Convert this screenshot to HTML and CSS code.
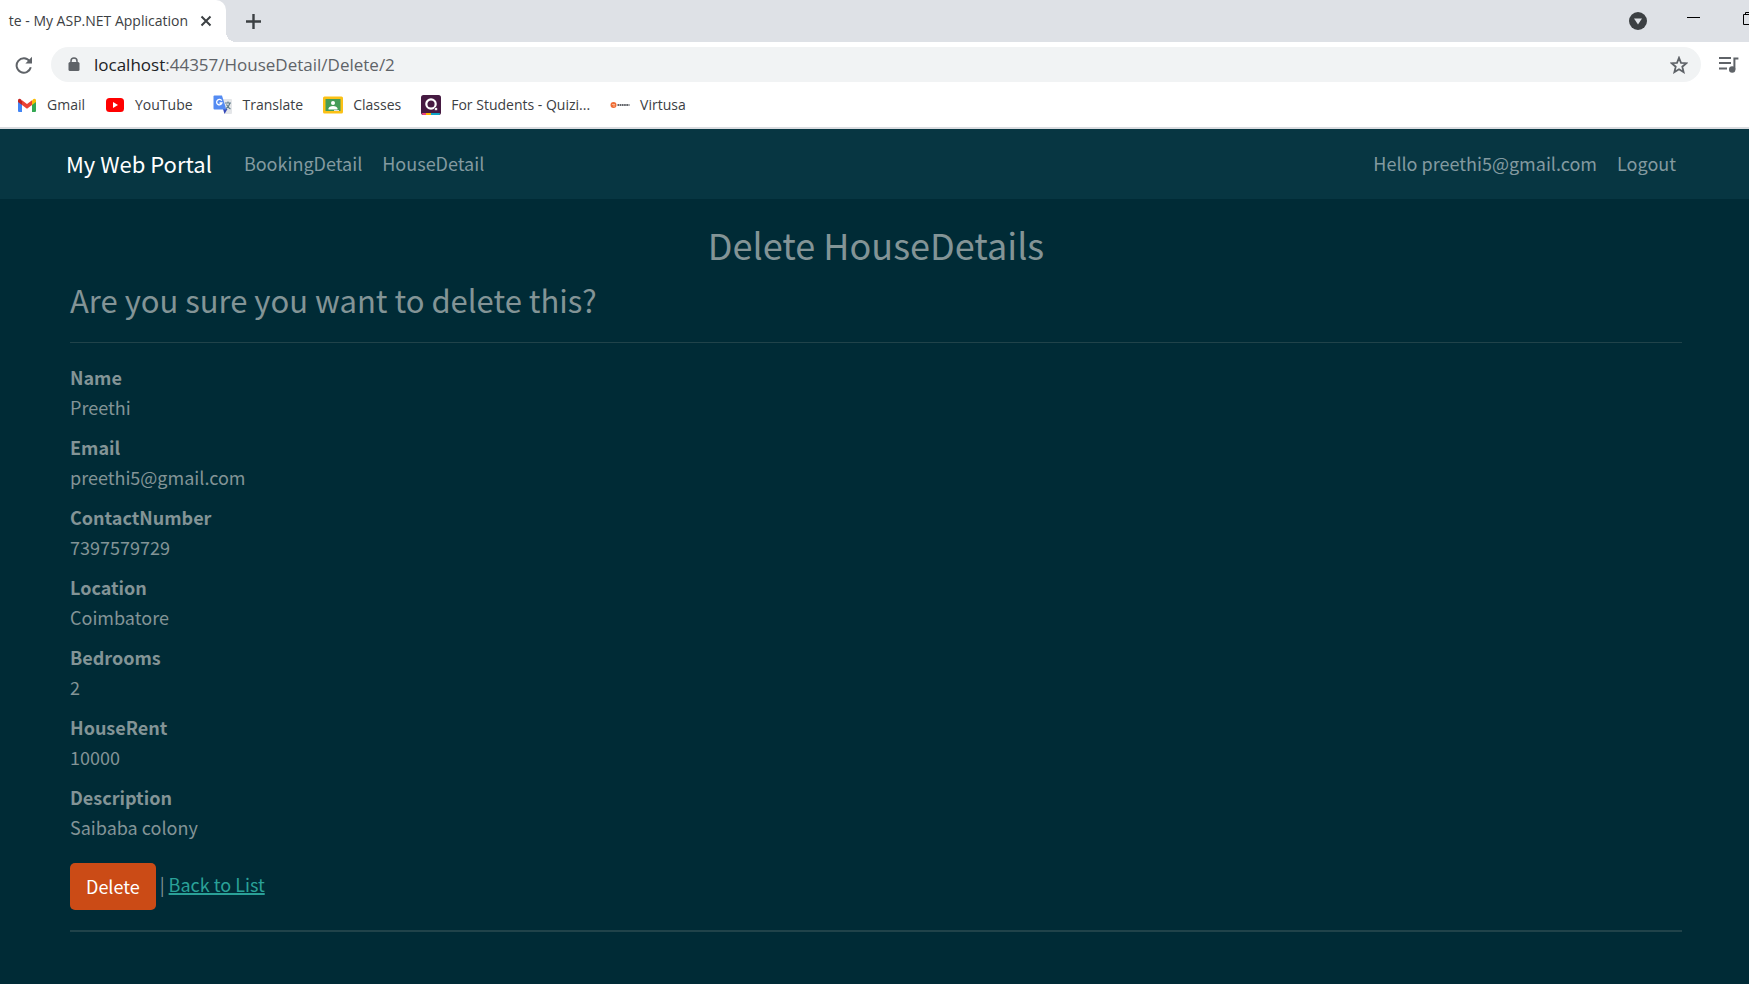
FILE: index.html
```html
<!DOCTYPE html>
<html lang="en">
<head>
<meta charset="utf-8">
<title>Delete - My ASP.NET Application</title>
<link rel="stylesheet" href="styles.css">
</head>
<body>
<header class="browser">
  <div class="tabstrip">
    <div class="tab">
      <span class="tab-title">te - My ASP.NET Application</span>
      <button class="icon-button" aria-label="Close tab"><svg width="12" height="12" viewBox="0 0 12 12" fill="none" stroke="#3c4043" stroke-width="2"><path d="M1.5 1.5l9 9M10.5 1.5l-9 9"/></svg></button>
    </div>
    <button class="icon-button new-tab" aria-label="New tab"><svg width="15" height="15" viewBox="0 0 15 15" fill="none" stroke="#3c4043" stroke-width="2.4"><path d="M7.5 0v15M0 7.500h15"/></svg></button>
    <div class="window-controls">
      <button class="icon-button" aria-label="Search tabs"><svg width="18" height="18" viewBox="0 0 18 18"><circle cx="9" cy="9" r="9" fill="#3c4043"/><path d="M5 6.5h8l-4 6z" fill="#dee1e6"/></svg></button>
      <button class="icon-button minimize" aria-label="Minimize"><svg width="13" height="1" viewBox="0 0 13 1"><path d="M0 0h13v1H0z"/></svg></button>
      <button class="icon-button restore" aria-label="Restore"><svg width="13" height="13" viewBox="0 0 13 13" fill="none" stroke="#000"><path d="M.5 2.5h10v10H.5zM2.5 2.5v-2h10v10h-2"/></svg></button>
    </div>
  </div>
  <div class="toolbar">
    <button class="icon-button reload" aria-label="Reload"><svg width="18" height="18" viewBox="0 0 18 18"><path d="M14.6 5.2A7.2 7.2 0 1 0 15.8 11.3" fill="none" stroke="#5f6368" stroke-width="2"/><path d="M17 .8v6.6h-6.6z" fill="#5f6368"/></svg></button>
    <div class="omnibox">
      <svg width="12" height="15" viewBox="0 0 12 15"><rect x="0.500" y="5" width="11" height="9" rx="1.500" fill="#5f6368"/><path d="M3 6V4a3 3 0 0 1 6 0V6" fill="none" stroke="#5f6368" stroke-width="1.500"/></svg>
      <span class="url"><span class="host">localhost</span>:44357/HouseDetail/Delete/2</span>
      <button class="icon-button" aria-label="Bookmark this page"><svg width="18" height="18" viewBox="0 0 18 18" fill="none" stroke="#5f6368" stroke-width="1.8"><path d="M9 1.800l2 5 5.500.4-4.200 3.500 1.300 5.400L9 13.200l-4.600 2.900 1.300-5.400-4.200-3.500 5.500-.4z"/></svg></button>
    </div>
    <button class="icon-button" aria-label="Media controls"><svg width="20" height="16" viewBox="0 0 20 16"><path d="M0 1h12M0 6h12M0 11.500h8" stroke="#5f6368" stroke-width="2"/><circle cx="13.200" cy="12.500" r="3.200" fill="#5f6368"/><path d="M15.400 12.500V1.500h4" fill="none" stroke="#5f6368" stroke-width="2"/></svg></button>
  </div>
  <nav class="bookmarks" aria-label="Bookmarks">
    <a href="#"><svg width="20" height="20" viewBox="0 0 20 20"><path d="M1 5v11q0 1 1 1h3V8z" fill="#4285f4"/><path d="M19 5v11q0 1-1 1h-3V8z" fill="#34a853"/><path d="M15 5.500l1.500-1.500Q19 3 19 5.500V7l-4 3z" fill="#fbbc04"/><path d="M5 5.500L3.500 4Q1 3 1 5.500V7l4 3z" fill="#c5221f"/><path d="M5 5.300L10 9l5-3.700V10l-5 3.700L5 10z" fill="#ea4335"/></svg><span>Gmail</span></a>
    <a href="#"><svg width="20" height="20" viewBox="0 0 20 20"><rect x="1" y="3" width="18" height="14" rx="3.500" fill="#f00"/><path d="M8 7v6l5-3z" fill="#fff"/></svg><span>YouTube</span></a>
    <a href="#"><svg width="20" height="20" viewBox="0 0 20 20"><path d="M8 4h10q1 0 1 1v13q0 1-1 1h-6z" fill="#e4e6e9"/><path d="M12 8h6M15 6.500V8M17 8q-1 4-4.500 6M13.500 9.500q1.500 3 4 4.500" fill="none" stroke="#607d8b" stroke-width="1.100"/><path d="M10 14h4.500l-3 5z" fill="#3548b8"/><path d="M1.500 .5H9l4.300 14H1.500q-1 0-1-1v-12q0-1 1-1z" fill="#548bf2"/><path d="M8.700 5.800A2.700 2.700 0 1 0 8.900 8H6.500" fill="none" stroke="#fff" stroke-width="1.300"/></svg><span>Translate</span></a>
    <a href="#"><svg width="20" height="20" viewBox="0 0 20 20"><rect y="1.500" width="20" height="17" rx="1.500" fill="#fbc116"/><rect x="2.500" y="4" width="15" height="12" fill="#459c58"/><circle cx="10" cy="8" r="2" fill="#fff"/><path d="M5.500 13.500Q6 11 10 11t4.500 2.500v1h-9z" fill="#fff"/><path d="M11 15h5v1h-5z" fill="#ddd"/></svg><span>Classes</span></a>
    <a href="#"><svg width="20" height="20" viewBox="0 0 20 20"><rect width="20" height="20" rx="2.500" fill="#461a42"/><path d="M1 18h4v2H2q-1 0-1-2z" fill="#ec407a"/><path d="M5 18h5v2H5z" fill="#ffb300"/><path d="M10 18h9q0 2-1 2h-8z" fill="#0ea5c6"/><circle cx="10" cy="9" r="4.700" fill="none" stroke="#fff" stroke-width="2.200"/><circle cx="15" cy="14" r="1.600" fill="#fff" stroke="#461a42" stroke-width=".6"/></svg><span>For Students - Quizi...</span></a>
    <a href="#"><svg width="20" height="20" viewBox="0 0 20 20"><circle cx="3.500" cy="10" r="3" fill="#ef6c35"/><path d="M2 9.500h3M3 11h2" stroke="#f8b590"/><path d="M7.500 10h12" stroke="#63666b" stroke-width="2.200" stroke-dasharray="1.700 .5"/></svg><span>Virtusa</span></a>
  </nav>
</header>
<nav class="navbar" aria-label="Main">
  <a class="brand" href="#">My Web Portal</a>
  <a class="nav-link" href="#">BookingDetail</a>
  <a class="nav-link" href="#">HouseDetail</a>
  <div class="account">
    <a class="nav-link" href="#">Hello preethi5@gmail.com</a>
    <a class="nav-link" href="#">Logout</a>
  </div>
</nav>
<main class="content">
  <h1>Delete HouseDetails</h1>
  <h2>Are you sure you want to delete this?</h2>
  <hr>
  <dl>
    <dt>Name</dt><dd>Preethi</dd>
    <dt>Email</dt><dd>preethi5@gmail.com</dd>
    <dt>ContactNumber</dt><dd>7397579729</dd>
    <dt>Location</dt><dd>Coimbatore</dd>
    <dt>Bedrooms</dt><dd>2</dd>
    <dt>HouseRent</dt><dd>10000</dd>
    <dt>Description</dt><dd>Saibaba colony</dd>
  </dl>
  <form class="actions">
    <button class="delete" type="button">Delete</button>
    <span class="after">|</span>
    <a class="after back" href="#">Back to List</a>
  </form>
  <hr class="footer-rule">
</main>
</body>
</html>
```

FILE: styles.css
```css
* { box-sizing: border-box; }

body {
  margin: 0;
  min-height: 100vh;
  overflow-x: hidden;
  background: #002b36;
  color: #839496;
  font: 18px/30px "Noto Sans CJK SC", sans-serif;
}

a { text-decoration: none; }
svg { display: block; flex: none; }

.browser {
  background: #fff;
  color: #3c4043;
  font: 14px/20px "Open Sans", sans-serif;
  border-bottom: 2px solid #dadce0;
  overflow: hidden;
}

.icon-button {
  display: block;
  flex: none;
  padding: 0;
  border: 0;
  background: none;
}

.tabstrip {
  display: flex;
  align-items: center;
  height: 42px;
  background: #dee1e6;
}

.tab {
  position: relative;
  display: flex;
  align-items: center;
  justify-content: flex-end;
  gap: 12px;
  width: 226px;
  height: 42px;
  padding-right: 14px;
  background: #fff;
  border-top-right-radius: 10px;
  white-space: nowrap;
}

.tab::after {
  content: "";
  position: absolute;
  left: 100%;
  bottom: 0;
  width: 10px;
  height: 10px;
  background: radial-gradient(circle at 100% 0, #dee1e6 10px, #fff 10px);
}

.new-tab { margin-left: 20px; }

.window-controls {
  display: flex;
  align-items: center;
  margin-left: auto;
  margin-right: -7px;
}
.minimize { margin: 0 43px 7px 40px; }
.restore { margin-bottom: 5px; }

.toolbar {
  display: flex;
  align-items: center;
  gap: 18px;
  padding: 5px 10px 0 15px;
}

.omnibox {
  display: flex;
  flex: 1;
  align-items: center;
  height: 35px;
  padding: 0 13px 0 17px;
  border-radius: 18px;
  background: #f1f3f4;
  font-size: 17px;
}
.url { flex: 1; margin-left: 14px; color: #5f6368; }
.host { color: #202124; }

.bookmarks {
  display: flex;
  gap: 20px;
  padding: 13px 17px 12px;
}
.bookmarks a {
  display: flex;
  align-items: center;
  gap: 10px;
  color: #3c4043;
}

.navbar {
  display: flex;
  align-items: center;
  gap: 20px;
  height: 70px;
  padding: 0 73px 2px 66px;
  background: #073642;
}
.brand { margin-right: 12px; color: #fff; font-size: 22px; }
.nav-link { color: #839aa0; }
.account { display: flex; gap: 20px; margin-left: auto; }

.content { padding: 22px 67px 0 70px; }

h1, h2 { margin: 0 0 10px; font-weight: 400; }
h1 { font-size: 36px; line-height: 46px; text-align: center; }
h2 { font-size: 31px; line-height: 46px; }

hr {
  height: 1px;
  margin: 19px 0;
  border: 0;
  background: #20434a;
}

dl { margin: 0 0 21px; }
dt { font-weight: 700; }
dd { margin: 0 0 10px; }

.actions { display: flex; align-items: center; gap: 4px; }
.delete {
  height: 47px;
  padding: 0 16px 2px;
  border: 0;
  border-radius: 5px;
  background: #cb4b16;
  color: #fff;
  font: inherit;
}
.after { padding-bottom: 6px; }
.back { color: #2aa198; text-decoration: underline; text-decoration-thickness: 2px; }
.footer-rule { height: 2px; margin-top: 20px; }
```
